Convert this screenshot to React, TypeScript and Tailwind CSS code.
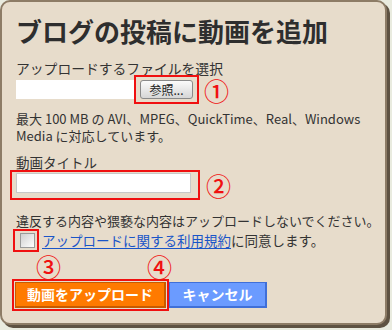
import React from "react";

const font = { fontFamily: '"Noto Sans CJK JP", "Noto Sans", sans-serif' };

function Mark({ n, className = "" }: { n: string; className?: string }) {
  return (
    <span className={`block text-[25px] font-medium leading-[25px] text-[#f01010] ${className}`}>
      {n}
    </span>
  );
}

export default function App() {
  return (
    <div className="h-[330px] w-[392px] bg-[#e9ebdf]" style={font}>
      <div className="h-[325px] w-[387px] rounded-[10px] border-2 border-[#8d7c66] bg-[#e7dccb] pl-[14px] pt-[9px] text-[13px] text-[#333] shadow-[3px_3px_0_#5e5242]">
        <h1 className="text-[26px] font-bold leading-[40px] text-[#2e2e2e]">
          ブログの投稿に動画を追加
        </h1>

        <p className="mt-[10px] text-[13.8px] leading-[14px]">アップロードするファイルを選択</p>

        <div className="flex items-center">
          <div className="h-[19px] w-[118px] bg-white" />
          <div className="border-2 border-[#f01010] px-[4px] py-[3px]">
            <button className="flex h-[19px] w-[53px] items-center justify-center rounded-[3px] border border-[#8a8a8a] bg-gradient-to-b from-[#fbfbfb] to-[#d6d6d6] text-[12px] leading-none text-[#222]">
              参照...
            </button>
          </div>
          <Mark n="①" className="ml-[5px] mt-[2px]" />
        </div>

        <p className="mt-[6px] leading-[17px]">
          最大 100 MB の AVI、MPEG、QuickTime、Real、Windows
          <br />
          Media に対応しています。
        </p>

        <p className="mt-[10px] text-[13.5px] leading-[16px]">動画タイトル</p>

        <div className="flex items-center">
          <div className="ml-[-6px] border-2 border-[#f01010] pb-[5px] pl-[4px] pr-[7px] pt-[1px]">
            <div className="h-[20px] w-[175px] border border-[#c8c8c8] bg-white" />
          </div>
          <Mark n="②" className="ml-[6px]" />
        </div>

        <p className="mt-[12px] whitespace-nowrap text-[13px] leading-[17px]">
          違反する内容や猥褻な内容はアップロードしないでください。
        </p>

        <div className="flex items-center">
          <div className="ml-[-3px] flex h-[23px] w-[26px] items-center border-2 border-[#f01010] pl-[5px]">
            <div className="h-[15px] w-[15px] border border-[#9a9a9a] bg-gradient-to-br from-[#d0d0d0] to-[#ffffff]" />
          </div>
          <span className="ml-[3px] whitespace-nowrap text-[13.5px] leading-[17px]">
            <a className="text-[#1a55c8] underline underline-offset-2">
              アップロードに関する利用規約
            </a>
            に同意します。
          </span>
        </div>

        <div className="mt-[2px] flex">
          <Mark n="③" className="ml-[20px]" />
          <Mark n="④" className="ml-[86px]" />
        </div>

        <div className="flex items-center">
          <div className="ml-[-4px] border-2 border-[#f01010] px-[1px] py-[1px]">
            <button className="h-[26px] w-[151px] border border-b-2 border-r-2 border-[#c85a00] bg-[#ff7a00] text-[14px] font-bold text-white">
              動画をアップロード
            </button>
          </div>
          <button className="h-[26px] w-[98px] border border-b-2 border-r-2 border-[#3f6fd8] bg-[#6b9bff] text-[14px] font-bold text-white">
            キャンセル
          </button>
        </div>
      </div>
    </div>
  );
}
